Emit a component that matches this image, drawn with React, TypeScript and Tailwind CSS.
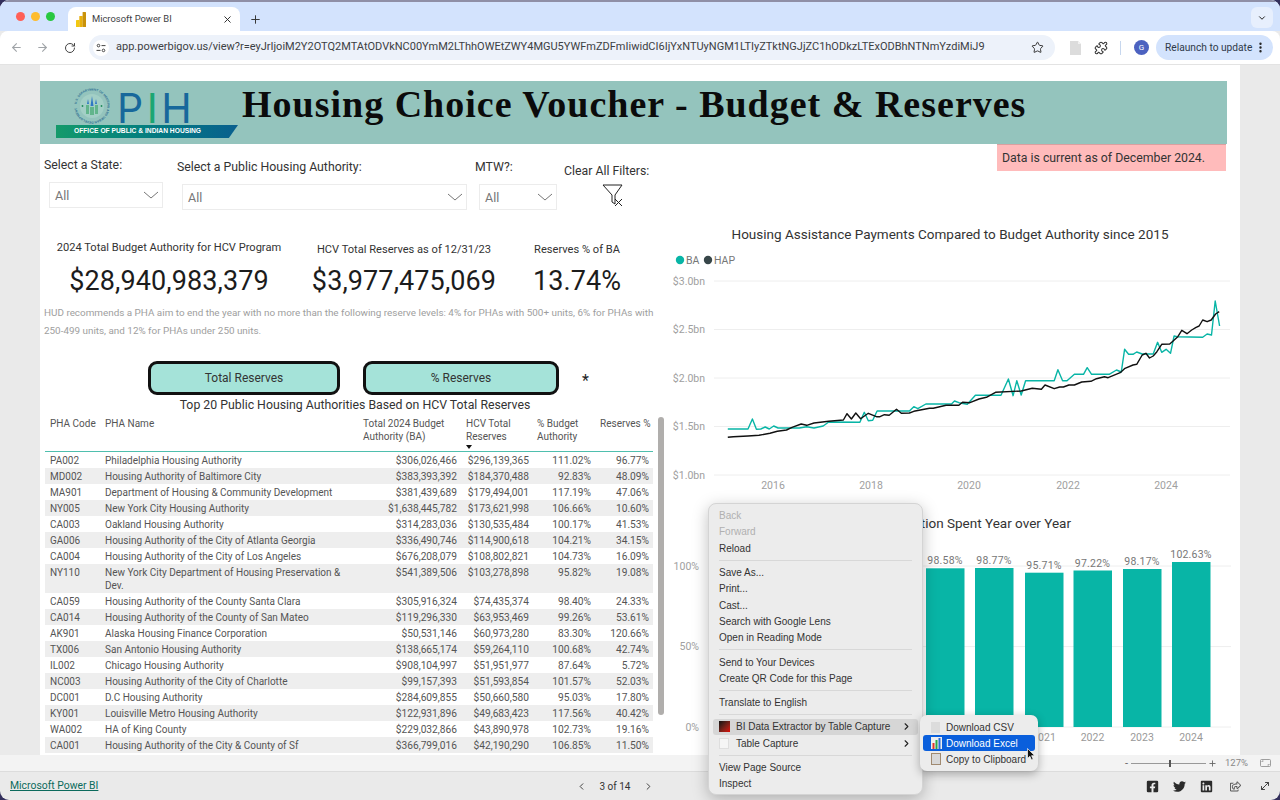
import { ArrowLeft, ArrowRight, ChevronDown, ChevronLeft, ChevronRight, EllipsisVertical, MoveDiagonal, Plus, Puzzle, RotateCw, Star, X } from 'lucide-react';
import { FaFacebookSquare, FaLinkedin, FaRegShareSquare, FaTwitter } from 'react-icons/fa';

const URL_TEXT =
  'app.powerbigov.us/view?r=eyJrIjoiM2Y2OTQ2MTAtODVkNC00YmM2LThhOWEtZWY4MGU5YWFmZDFmIiwidCI6IjYxNTUyNGM1LTIyZTktNGJjZC1hODkzLTExODBhNTNmYzdiMiJ9';

const rows = [
  ['PA002', 'Philadelphia Housing Authority', '$306,026,466', '$296,139,365', '111.02%', '96.77%'],
  ['MD002', 'Housing Authority of Baltimore City', '$383,393,392', '$184,370,488', '92.83%', '48.09%'],
  ['MA901', 'Department of Housing & Community Development', '$381,439,689', '$179,494,001', '117.19%', '47.06%'],
  ['NY005', 'New York City Housing Authority', '$1,638,445,782', '$173,621,998', '106.66%', '10.60%'],
  ['CA003', 'Oakland Housing Authority', '$314,283,036', '$130,535,484', '100.17%', '41.53%'],
  ['GA006', 'Housing Authority of the City of Atlanta Georgia', '$336,490,746', '$114,900,618', '104.21%', '34.15%'],
  ['CA004', 'Housing Authority of the City of Los Angeles', '$676,208,079', '$108,802,821', '104.73%', '16.09%'],
  ['NY110', 'New York City Department of Housing Preservation & Dev.', '$541,389,506', '$103,278,898', '95.82%', '19.08%'],
  ['CA059', 'Housing Authority of the County Santa Clara', '$305,916,324', '$74,435,374', '98.40%', '24.33%'],
  ['CA014', 'Housing Authority of the County of San Mateo', '$119,296,330', '$63,953,469', '99.26%', '53.61%'],
  ['AK901', 'Alaska Housing Finance Corporation', '$50,531,146', '$60,973,280', '83.30%', '120.66%'],
  ['TX006', 'San Antonio Housing Authority', '$138,665,174', '$59,264,110', '100.68%', '42.74%'],
  ['IL002', 'Chicago Housing Authority', '$908,104,997', '$51,951,977', '87.64%', '5.72%'],
  ['NC003', 'Housing Authority of the City of Charlotte', '$99,157,393', '$51,593,854', '101.57%', '52.03%'],
  ['DC001', 'D.C Housing Authority', '$284,609,855', '$50,660,580', '95.03%', '17.80%'],
  ['KY001', 'Louisville Metro Housing Authority', '$122,931,896', '$49,683,423', '117.56%', '40.42%'],
  ['WA002', 'HA of King County', '$229,032,866', '$43,890,978', '102.73%', '19.16%'],
  ['CA001', 'Housing Authority of the City & County of Sf', '$366,799,016', '$42,190,290', '106.85%', '11.50%'],
];

// traced off the reference, x/y in chart pixels
const baLine =
  '185,627 240,627 252,597 263,628 275,627 287,621 298,627 310,618 322,624 345,624 380,624 400,620 420,624 445,618 460,606 545,607 557,577 568,602 580,601 592,573 680,573 692,560 703,566 725,552 795,552 803,543 815,548 838,553 860,526 930,526 950,477 963,527 973,482 985,525 997,482 1075,482 1085,449 1098,482 1110,482 1130,463 1155,463 1165,443 1177,463 1225,463 1245,450 1258,456 1267,388 1278,403 1290,403 1300,396 1315,402 1345,402 1357,367 1368,397 1380,388 1392,400 1402,348 1410,350 1480,352 1492,342 1504,345 1514,243 1526,318';
const hapLine =
  '185,652 200,650 240,648 270,646 300,640 320,634 345,630 360,622 385,612 400,616 420,609 460,604 500,600 510,581 522,597 534,579 547,596 568,580 590,590 600,590 612,584 625,586 645,568 658,580 680,579 692,574 735,565 745,565 760,561 780,556 815,556 825,547 845,548 870,537 890,532 915,517 985,513 1015,505 1040,508 1050,495 1075,506 1090,501 1100,501 1115,495 1130,495 1150,486 1175,484 1190,476 1212,470 1222,473 1255,458 1268,445 1290,435 1300,433 1315,405 1325,400 1335,414 1345,408 1355,395 1368,373 1390,372 1400,362 1412,350 1423,331 1437,341 1450,330 1462,322 1470,318 1480,300 1492,305 1503,300 1515,282 1525,275';

const toPoints = (line: string) =>
  line
    .split(' ')
    .map((p) => {
      const [zx, zy] = p.split(',').map(Number);
      return `${(zx / 2.727 - 5).toFixed(1)},${(zy / 3).toFixed(1)}`;
    })
    .join(' ');

const bars = [
  { x: 261, top: 568.3, label: '98.58%' },
  { x: 310, top: 568, label: '98.77%' },
  { x: 360, top: 572.7, label: '95.71%' },
  { x: 408.5, top: 570.5, label: '97.22%' },
  { x: 458, top: 569, label: '98.17%' },
  { x: 507, top: 562, label: '102.63%' },
];

function Dropdown({ width }: { width: string }) {
  return (
    <div className={`${width} h-[26px] border border-[#ececec] flex items-center justify-between pl-[5px] pr-[3px] text-[12.5px] text-[#777]`}>
      <span className="pt-[3px]">All</span>
      <svg width="16" height="8" viewBox="0 0 16 8" fill="none" stroke="#666" strokeWidth="0.9">
        <path d="M1 1l7 6 7-6" />
      </svg>
    </div>
  );
}

function Kpi({ width, label, value, labelClass }: { width: string; label: string; value: string; labelClass: string }) {
  return (
    <div className={`${width} flex flex-col items-center`}>
      <div className={`text-[11.1px] text-[#333] leading-[14px] whitespace-nowrap ${labelClass}`}>{label}</div>
      <div className="mt-[10px] text-[27px] leading-[32px] tracking-[0.1px] text-[#1c1c1c] whitespace-nowrap">{value}</div>
    </div>
  );
}

function MenuItem({ label, disabled, arrow, active, icon }: { label: string; disabled?: boolean; arrow?: boolean; active?: boolean; icon?: React.ReactNode }) {
  return (
    <div className={`h-[16.3px] mx-[4px] rounded-[3px] flex items-center pl-[6px] pr-[6px] ${active ? 'bg-[#d6d6d6]' : ''} ${disabled ? 'text-[#b0b0b0]' : 'text-[#333]'}`}>
      {icon && <span className="w-[17px] flex-none flex items-center">{icon}</span>}
      <span className="flex-1 whitespace-nowrap">{label}</span>
      {arrow && <ChevronRight size={11} strokeWidth={2.4} className="text-[#222]" />}
    </div>
  );
}

function MenuSep() {
  return <div className="h-px bg-[#d8d8d8] mx-[10px] my-[3.5px]" />;
}

function Seal() {
  return (
    <svg width="36" height="36" viewBox="0 0 36 36" className="flex-none">
      <defs>
        <path id="seal-ring" d="M18 18m-15.5 0a15.5 15.5 0 1 1 31 0a15.5 15.5 0 1 1-31 0" />
      </defs>
      <text fontSize="3.1" fill="#2f6f93" fontFamily="Liberation Sans, sans-serif" fontWeight="700">
        <textPath href="#seal-ring" startOffset="2%">U.S. DEPARTMENT OF HOUSING AND URBAN DEVELOPMENT</textPath>
      </text>
      <circle cx="18" cy="18" r="12" fill="#a3cfc6" />
      <path d="M12 17v9h3v-9zM16 19v8h4v-8zM21 17v9h3v-9z" fill="#62b58c" />
      <path d="M13 16l1-5 1 5zM16.5 18l1.5-10 1.5 10zM21 16l1-5 1 5z" fill="#2f78c4" />
      <circle cx="8.5" cy="18" r="0.9" fill="#1f8a5a" />
      <circle cx="27.5" cy="18" r="0.9" fill="#1f8a5a" />
    </svg>
  );
}

export default function App() {
  return (
    <div className="w-[1280px] h-[800px] bg-[#332f5c] overflow-hidden">
      <div className="w-[1280px] h-[800px] rounded-[9px] overflow-hidden relative flex flex-col bg-[#eaeaea] [font-family:Roboto,sans-serif]">
        {/* Browser tabs */}
        <div className="h-[31px] flex-none bg-[#d3e3fd] border-t-2 border-[#8f8fa6] flex items-end relative">
          <div className="flex items-center gap-[6px] pl-[15.5px] pb-[10px] w-[68px] flex-none">
            <span className="w-[9px] h-[9px] rounded-full bg-[#ff5f57]" />
            <span className="w-[9px] h-[9px] rounded-full bg-[#febc2e]" />
            <span className="w-[9px] h-[9px] rounded-full bg-[#28c840]" />
          </div>
          <div className="w-[172px] h-[24px] bg-white rounded-t-[8px] flex items-center pl-[8px] pr-[7px] flex-none">
            <svg width="10" height="15" viewBox="0 0 10 15" className="flex-none">
              <rect x="0" y="8" width="3.4" height="7" fill="#f2c811" rx="0.5" />
              <rect x="3.3" y="4" width="3.4" height="11" fill="#e8b00d" rx="0.5" />
              <rect x="6.6" y="0" width="3.4" height="15" fill="#c9920a" rx="0.5" />
            </svg>
            <span className="ml-[6px] flex-1 text-[9.4px] text-[#3c4043] whitespace-nowrap">Microsoft Power BI</span>
            <X size={11} strokeWidth={2} className="text-[#222]" />
          </div>
          <Plus size={13} strokeWidth={1.8} className="ml-[9px] mb-[5px] text-[#333]" />
          <div className="ml-auto mr-[7px] mb-[3px] w-[22px] h-[21px] bg-[#e7effd] rounded-[6px] flex items-center justify-center">
            <ChevronDown size={10} strokeWidth={2.4} className="text-[#222]" />
          </div>
        </div>

        {/* Browser toolbar */}
        <div className="h-[34px] flex-none bg-white border-b border-[#e3e3e3] rounded-t-[8px] flex items-center text-[#5f6368]">
          <ArrowLeft size={13} className="ml-[10px] text-[#a0a4a8]" />
          <ArrowRight size={13} className="ml-[13px] text-[#a0a4a8]" />
          <RotateCw size={12} strokeWidth={2} className="ml-[15px] text-[#444]" />
          <div className="ml-[13px] w-[966px] h-[25px] rounded-full bg-[#edf2fa] flex items-center flex-none">
            <span className="ml-[4px] w-[16px] h-[16px] rounded-full bg-white flex items-center justify-center flex-none">
              <svg width="10" height="10" viewBox="0 0 10 10" fill="none" stroke="#444" strokeWidth="1">
                <circle cx="2.5" cy="2.6" r="1.3" />
                <path d="M5.5 2.6H9.5M0.5 7.4H4.5" />
                <circle cx="7.5" cy="7.4" r="1.3" />
              </svg>
            </span>
            <span className="ml-[7px] text-[11px] text-[#3c4043] whitespace-nowrap w-[905px] overflow-hidden">{URL_TEXT}</span>
            <Star size={13} strokeWidth={1.8} className="ml-[10px] text-[#333]" />
          </div>
          <svg width="11" height="14" viewBox="0 0 11 14" className="ml-[15px] flex-none">
            <path d="M0 0h8l3 3v11H0z" fill="#dcdcdc" />
            <path d="M8 0l3 3H8z" fill="#f2f2f2" />
          </svg>
          <Puzzle size={14} strokeWidth={1.8} className="ml-[13px] text-[#333]" />
          <div className="ml-[12px] w-px h-[14px] bg-[#c7d7ee]" />
          <div className="ml-[13px] w-[15px] h-[15px] rounded-full bg-[#4c62c0] text-white text-[8px] flex items-center justify-center">G</div>
          <div className="ml-[7px] w-[117px] h-[25px] rounded-full bg-[#d3e3fd] flex items-center pl-[9px] text-[10.2px] text-[#2f3a4a] flex-none whitespace-nowrap">
            Relaunch to update
            <EllipsisVertical size={13} strokeWidth={2.4} className="ml-[2px] text-[#222]" />
          </div>
        </div>

        {/* Report page */}
        <div className="h-[690px] flex-none pl-[40px] pr-[40px] overflow-hidden">
          <div className="h-full bg-white pt-[16px] pr-[13px] flex flex-col">
            <div className="h-[63px] flex-none bg-[#94c4bd] flex items-start relative">
              <div className="w-[202px] flex-none h-full relative">
                <div className="flex items-start pl-[34px] pt-[7px]">
                  <Seal />
                  <div className="ml-[7px] mt-[3px] text-[41px] leading-[34px] tracking-[3.5px] [font-family:Inter,sans-serif] text-[#17689b] whitespace-nowrap">
                    P<span className="text-[#1ba672]">I</span>H
                  </div>
                </div>
                <div className="absolute left-[16px] top-[44px] w-[182px] h-[13px] bg-gradient-to-r from-[#149a6a] to-[#0a5f8e] [clip-path:polygon(0_0,100%_0,95%_100%,0_100%)] flex items-center pl-[18px] text-[6.7px] font-bold text-white whitespace-nowrap [font-family:'Liberation_Sans',sans-serif]">
                  OFFICE OF PUBLIC &amp; INDIAN HOUSING
                </div>
              </div>
              <h1 className="[font-family:'Liberation_Serif',serif] font-bold text-[38px] leading-[46px] text-[#0b0b0b] whitespace-nowrap tracking-[1px]">
                Housing Choice Voucher - Budget &amp; Reserves
              </h1>
            </div>

            <div className="flex-1 flex min-h-0">
              {/* Left column */}
              <div className="w-[625px] flex-none">
                <div className="h-[70px] flex text-[12.3px] text-[#333]">
                  <div className="ml-[4px] w-[133px] pt-[13px]">
                    <div className="leading-[17px]">Select a State:</div>
                    <div className="mt-[8px] ml-[5px]"><Dropdown width="w-[114px]" /></div>
                  </div>
                  <div className="w-[298px] pt-[15px]">
                    <div className="leading-[17px]">Select a Public Housing Authority:</div>
                    <div className="mt-[8px] ml-[5px]"><Dropdown width="w-[285px]" /></div>
                  </div>
                  <div className="w-[89px] pt-[15px]">
                    <div className="leading-[17px]">MTW?:</div>
                    <div className="mt-[8px] ml-[4px]"><Dropdown width="w-[78px]" /></div>
                  </div>
                  <div className="pt-[19px] flex flex-col">
                    <div className="leading-[17px] whitespace-nowrap">Clear All Filters:</div>
                    <svg width="22" height="23" viewBox="0 0 22 23" fill="none" stroke="#222" strokeWidth="1" className="mt-[4px] ml-[38px]">
                      <path d="M1 1h19l-7 10v9l-3-2v-7z" />
                      <path d="M13 15l7 7M20 15l-7 7" />
                    </svg>
                  </div>
                </div>

                <div className="flex mt-[27px] h-[58px]">
                  <Kpi width="w-[258px]" label="2024 Total Budget Authority for HCV Program" value="$28,940,983,379" labelClass="" />
                  <Kpi width="w-[212px]" label="HCV Total Reserves as of 12/31/23" value="$3,977,475,069" labelClass="mt-[2px] -mb-[2px]" />
                  <Kpi width="w-[134px]" label="Reserves % of BA" value="13.74%" labelClass="mt-[2px] -mb-[2px]" />
                </div>

                <p className="mt-[5px] ml-[4px] w-[615px] text-[9.9px] leading-[18px] text-[#9e9e9e]">
                  HUD recommends a PHA aim to end the year with no more than the following reserve levels: 4% for PHAs with 500+ units, 6% for PHAs with 250-499 units, and 12% for PHAs under 250 units.
                </p>

                <div className="mt-[21px] flex items-center h-[34px]">
                  <button className="ml-[108px] w-[192px] h-[34px] rounded-[9px] border-[3px] border-[#111] bg-[#a5e3d9] text-[12px] text-[#333]">Total Reserves</button>
                  <button className="ml-[23px] w-[196px] h-[34px] rounded-[9px] border-[3px] border-[#111] bg-[#a5e3d9] text-[12px] text-[#333]">% Reserves</button>
                  <span className="ml-[23px] mt-[6px] text-[16px] text-[#222]">*</span>
                </div>

                <div className="mt-[2px] text-center pl-[5px] text-[12.3px] leading-[16px] text-[#333] w-[625px]">
                  Top 20 Public Housing Authorities Based on HCV Total Reserves
                </div>

                {/* Table */}
                <div className="ml-[5px] mt-[4px] flex">
                  <div className="w-[608px] flex-none text-[10.2px] text-[#555]">
                    <div className="h-[35px] grid grid-cols-[55px_258px_104px_71px_62px_58px] border-b border-[#4fbfae] leading-[13px] text-[#555] text-[10px] relative">
                      <div className="pl-[5px] whitespace-nowrap">PHA Code</div>
                      <div className="pl-[5px]">PHA Name</div>
                      <div className="pl-[5px]">Total 2024 Budget Authority (BA)</div>
                      <div className="pl-[4px]">HCV Total Reserves</div>
                      <div className="pl-[4px]">% Budget Authority</div>
                      <div className="pl-[5px] whitespace-nowrap">Reserves %</div>
                      <span className="absolute left-[421px] top-[28px] w-0 h-0 border-l-[3px] border-r-[3px] border-t-[4px] border-l-transparent border-r-transparent border-t-[#111]" />
                    </div>
                    {rows.map((row, i) => (
                      <div key={row[0]} className={`grid grid-cols-[55px_258px_104px_71px_62px_58px] leading-[13px] py-[1.5px] ${i % 2 === 1 ? 'bg-[#eeeeee]' : ''}`}>
                        <div className="pl-[5px] text-[10px]">{row[0]}</div>
                        <div className="pl-[5px] pr-[10px] text-[10px]">{row[1]}</div>
                        <div className="text-right pr-[5px]">{row[2]}</div>
                        <div className="text-right pr-[4px]">{row[3]}</div>
                        <div className="text-right pr-[4px]">{row[4]}</div>
                        <div className="text-right pr-[4px]">{row[5]}</div>
                      </div>
                    ))}
                  </div>
                  <div className="ml-[5px] w-[6px] h-[298px] rounded-full bg-[#b0aeac] flex-none" />
                </div>
              </div>

              {/* Right column */}
              <div className="flex-1 min-w-0 relative">
                <div className="ml-[332px] w-[229px] h-[27px] bg-[#ffbbbb] border-t border-[#d9a0a0] flex items-center pl-[5px] text-[12.3px] text-[#333] whitespace-nowrap">
                  Data is current as of December 2024.
                </div>
                <svg width="575" height="290" viewBox="0 0 575 290" className="block mt-[49px]" fontFamily="Roboto, sans-serif">
                  <text x="285" y="19" fontSize="13.5" fill="#333" textAnchor="middle">Housing Assistance Payments Compared to Budget Authority since 2015</text>
                  <circle cx="15" cy="40" r="4.2" fill="#08b5a6" />
                  <text x="21" y="44" fontSize="10.5" fill="#777">BA</text>
                  <circle cx="43" cy="40" r="4.2" fill="#374649" />
                  <text x="49" y="44" fontSize="10.5" fill="#777">HAP</text>
                  {[['$3.0bn', 61], ['$2.5bn', 109.5], ['$2.0bn', 158], ['$1.5bn', 206.5], ['$1.0bn', 255]].map(([label, y]) => (
                    <g key={label}>
                      <line x1="49" x2="565" y1={y} y2={y} stroke="#eeeeee" />
                      <text x="40" y={Number(y) + 3.5} fontSize="10.5" fill="#a0a0a0" textAnchor="end">{label}</text>
                    </g>
                  ))}
                  {[['2016', 108], ['2018', 206], ['2020', 304], ['2022', 403], ['2024', 501]].map(([label, x]) => (
                    <text key={label} x={x} y="269" fontSize="10.5" fill="#a0a0a0" textAnchor="middle">{label}</text>
                  ))}
                  <polyline points={toPoints(baLine)} fill="none" stroke="#08b5a6" strokeWidth="1.4" strokeLinejoin="round" />
                  <polyline points={toPoints(hapLine)} fill="none" stroke="#111" strokeWidth="1.4" strokeLinejoin="round" />
                </svg>
                <svg width="575" height="250" viewBox="0 0 575 250" className="absolute left-0 top-[360px]" fontFamily="Roboto, sans-serif">
                  <text x="406" y="24" fontSize="13.5" fill="#333" textAnchor="end">Budget Utilization Spent Year over Year</text>
                  {[['100%', 62], ['50%', 142.6], ['0%', 223]].map(([label, y]) => (
                    <g key={label}>
                      <line x1="49" x2="566" y1={y} y2={y} stroke="#eeeeee" />
                      <text x="34" y={Number(y) + 3.5} fontSize="10.5" fill="#a0a0a0" textAnchor="end">{label}</text>
                    </g>
                  ))}
                  {bars.map((b, i) => (
                    <g key={b.label}>
                      <rect x={b.x} y={b.top - 504} width="38.5" height={727 - b.top} fill="#08b5a6" />
                      <text x={b.x + 19} y={b.top - 508} fontSize="10.5" fill="#777" textAnchor="middle" letterSpacing="0.2">{b.label}</text>
                      <text x={b.x + 19} y="237" fontSize="10.5" fill="#999" textAnchor="middle">{2019 + i}</text>
                    </g>
                  ))}
                </svg>
              </div>
            </div>
          </div>
        </div>

        {/* Zoom strip */}
        <div className="h-[17px] flex-none bg-[#f3f3f3] border-b border-[#dcdcdc] flex items-center justify-end pr-[9px] text-[#666]">
          <span className="text-[11px] leading-none">-</span>
          <div className="ml-[3px] w-[75px] h-px bg-[#999] relative">
            <span className="absolute left-[38px] -top-[3px] w-[2px] h-[7px] bg-[#555]" />
          </div>
          <Plus size={9} strokeWidth={2.4} className="ml-[2px]" />
          <span className="ml-[8px] text-[9.5px] text-[#888]">127%</span>
          <svg width="11" height="8" viewBox="0 0 11 8" fill="none" stroke="#888" strokeWidth="0.8" className="ml-[12px]">
            <rect x="0.5" y="0.5" width="10" height="7" rx="1" />
            <path d="M2 3V2h1.5M9 5v1H7.5" />
          </svg>
        </div>

        {/* Report footer */}
        <div className="flex-1 flex items-center text-[#333]">
          <a className="ml-[10px] w-[566px] text-[10.4px] text-[#0b6a5c] underline whitespace-nowrap">Microsoft Power BI</a>
          <ChevronLeft size={11} />
          <span className="w-[56px] text-center text-[10px]">3 of 14</span>
          <ChevronRight size={11} />
          <FaFacebookSquare size={13} className="ml-[492px] text-[#2b2b2b]" />
          <FaTwitter size={13} className="ml-[14px] text-[#2b2b2b]" />
          <FaLinkedin size={13} className="ml-[14px] text-[#2b2b2b]" />
          <FaRegShareSquare size={11} className="ml-[17px] text-[#555]" />
          <MoveDiagonal size={12} className="ml-[18px] text-[#444]" />
        </div>

        {/* Context menu */}
        <div className="absolute left-[708px] top-[503px] w-[215px] h-[292px] bg-[#ececec] rounded-[8px] border border-[#d4d4d4] shadow-[0_4px_16px_rgba(0,0,0,0.25)] pt-[3.5px] text-[10px] [font-family:'Liberation_Sans',sans-serif]">
          <MenuItem label="Back" disabled />
          <MenuItem label="Forward" disabled />
          <MenuItem label="Reload" />
          <MenuSep />
          <MenuItem label="Save As..." />
          <MenuItem label="Print..." />
          <MenuItem label="Cast..." />
          <MenuItem label="Search with Google Lens" />
          <MenuItem label="Open in Reading Mode" />
          <MenuSep />
          <MenuItem label="Send to Your Devices" />
          <MenuItem label="Create QR Code for this Page" />
          <MenuSep />
          <MenuItem label="Translate to English" />
          <MenuSep />
          <MenuItem label="BI Data Extractor by Table Capture" arrow active icon={<span className="w-[11px] h-[11px] bg-gradient-to-br from-[#111] to-[#e00000]" />} />
          <MenuItem label="Table Capture" arrow icon={<span className="w-[10px] h-[11px] bg-[#f5f5f5] border border-[#dedede]" />} />
          <MenuSep />
          <MenuItem label="View Page Source" />
          <MenuItem label="Inspect" />
        </div>

        {/* Submenu */}
        <div className="absolute left-[920px] top-[715px] w-[118px] h-[56px] bg-[#ececec] rounded-[7px] shadow-[0_3px_10px_rgba(0,0,0,0.3)] pt-[4px] text-[10px] [font-family:'Liberation_Sans',sans-serif] text-[#333]">
          <div className="h-[16px] mx-[3px] pl-[8px] flex items-center whitespace-nowrap">
            <span className="w-[15px] flex-none"><span className="block w-[9px] h-[11px] bg-[#dcdcdc]" /></span>
            Download CSV
          </div>
          <div className="h-[16px] mx-[3px] pl-[8px] rounded-[3px] bg-[#0a5fdc] text-white flex items-center whitespace-nowrap">
            <svg width="11" height="12" viewBox="0 0 11 12" className="mr-[4px] flex-none">
              <rect x="0" y="0" width="11" height="12" fill="#eeeeee" />
              <rect x="1.5" y="6" width="2" height="6" fill="#e0352b" />
              <rect x="4.5" y="3" width="2" height="9" fill="#2aa84a" />
              <rect x="7.5" y="1" width="2" height="11" fill="#2f6fd6" />
            </svg>
            Download Excel
          </div>
          <div className="h-[16px] mx-[3px] pl-[8px] flex items-center whitespace-nowrap">
            <span className="w-[15px] flex-none"><span className="block w-[10px] h-[12px] bg-[#d8d8d8] border border-[#a08a70]" /></span>
            Copy to Clipboard
          </div>
        </div>
        {/* Mouse pointer */}
        <svg width="9" height="13" viewBox="0 0 9 13" className="absolute left-[1027px] top-[748px]">
          <path d="M0.5 0.5v10l2.4-2.2 1.6 3.7 1.7-.7-1.6-3.6h3.2z" fill="#111" stroke="#fff" strokeWidth="0.7" />
        </svg>
      </div>
    </div>
  );
}
